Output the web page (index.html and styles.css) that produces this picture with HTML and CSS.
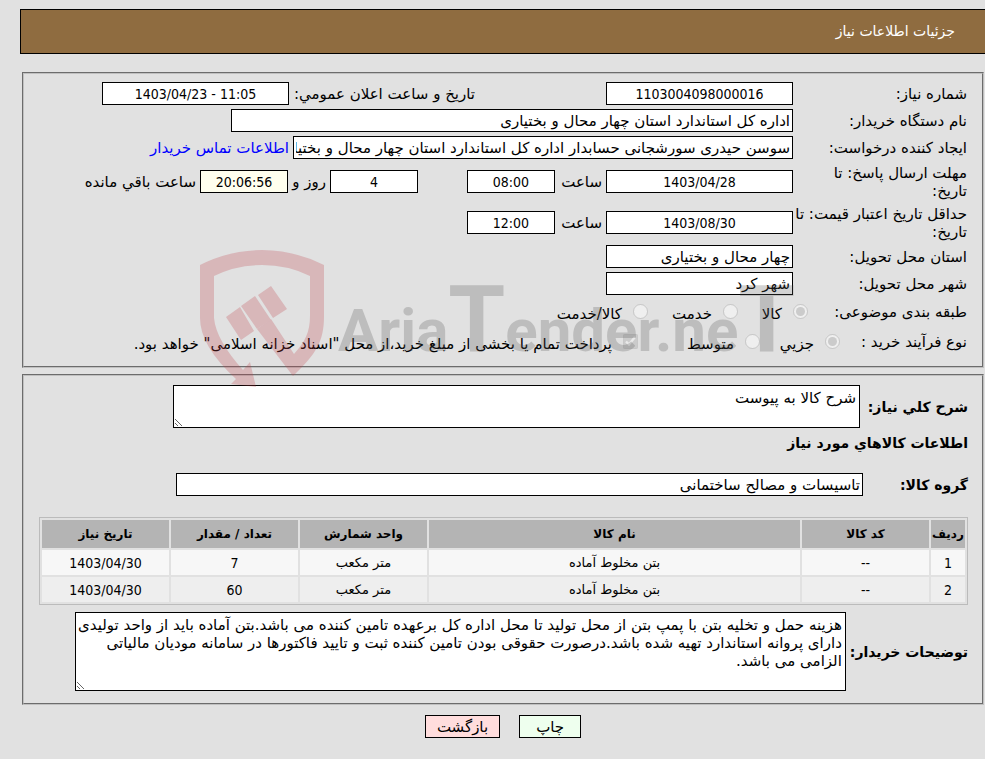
FILE: index.html
```
<!DOCTYPE html>
<html lang="fa" dir="rtl">
<head>
    <meta charset="UTF-8">
    <title>جزئیات اطلاعات نیاز</title>
    <link rel="stylesheet" href="styles.css">
</head>
<body>
<h1 class="title">جزئیات اطلاعات نیاز</h1>
<form class="page">
    <fieldset class="box info">
        <div class="row">
            <label class="name" for="number">شماره نیاز:</label>
            <input class="date num" id="number" value="1103004098000016" readonly>
            <label class="public" for="public">تاریخ و ساعت اعلان عمومي:</label>
            <input class="date num" id="public" value="1403/04/23 - 11:05" readonly>
        </div>
        <div class="row">
            <label class="name" for="org">نام دستگاه خریدار:</label>
            <input class="org" id="org" value="اداره کل استاندارد استان چهار محال و بختیاری" readonly>
        </div>
        <div class="row">
            <label class="name" for="creator">ایجاد کننده درخواست:</label>
            <input class="creator" id="creator" value="سوسن حیدری سورشجانی حسابدار اداره کل استاندارد استان چهار محال و بختیاری" readonly>
            <a href="#contact">اطلاعات تماس خریدار</a>
        </div>
        <div class="row tall">
            <label class="name" for="reply">مهلت ارسال پاسخ: تا<br>تاریخ:</label>
            <input class="date num" id="reply" value="1403/04/28" readonly>
            <label class="hour" for="replyHour">ساعت</label>
            <input class="time num" id="replyHour" value="08:00" readonly>
            <input class="time num days" id="days" value="4" readonly>
            <label class="and" for="days">روز و</label>
            <input class="time num remain" id="remain" value="20:06:56" readonly>
            <label for="remain">ساعت باقي مانده</label>
        </div>
        <div class="row tall">
            <label class="name" for="credit">حداقل تاریخ اعتبار قیمت: تا<br>تاریخ:</label>
            <input class="date num" id="credit" value="1403/08/30" readonly>
            <label class="hour" for="creditHour">ساعت</label>
            <input class="time num" id="creditHour" value="12:00" readonly>
        </div>
        <div class="row">
            <label class="name" for="state">استان محل تحویل:</label>
            <input class="date" id="state" value="چهار محال و بختیاری" readonly>
        </div>
        <div class="row">
            <label class="name" for="city">شهر محل تحویل:</label>
            <input class="date" id="city" value="شهر کرد" readonly>
        </div>
        <div class="row options">
            <span class="subject">طبقه بندی موضوعی:</span>
            <label class="kind kala"><input type="radio" name="kind" checked disabled>کالا</label>
            <label class="kind khedmat"><input type="radio" name="kind" disabled>خدمت</label>
            <label class="kind"><input type="radio" name="kind" disabled>کالا/خدمت</label>
        </div>
        <div class="row options">
            <span class="process">نوع فرآیند خرید :</span>
            <label class="kind small"><input type="radio" name="size" checked disabled>جزیي</label>
            <label class="kind medium"><input type="radio" name="size" disabled>متوسط</label>
            <label class="kind"><input type="checkbox" checked disabled>پرداخت تمام یا بخشی از مبلغ خرید،از محل "اسناد خزانه اسلامی" خواهد بود.</label>
        </div>
    </fieldset>
    <fieldset class="box goods">
        <div class="row">
            <label class="bold general" for="summary">شرح کلي نیاز:</label>
            <textarea class="summary" id="summary" readonly>شرح کالا به پیوست</textarea>
        </div>
        <h2 class="bold">اطلاعات کالاهاي مورد نیاز</h2>
        <div class="row">
            <label class="bold group" for="group">گروه کالا:</label>
            <input class="groupName" id="group" value="تاسیسات و مصالح ساختمانی" readonly>
        </div>
        <table>
            <thead>
            <tr>
                <th class="c1">ردیف</th>
                <th class="c2">کد کالا</th>
                <th>نام کالا</th>
                <th class="c2">واحد شمارش</th>
                <th class="c2">تعداد / مقدار</th>
                <th class="c2">تاریخ نیاز</th>
            </tr>
            </thead>
            <tbody>
            <tr>
                <td class="num">1</td>
                <td class="num">--</td>
                <td>بتن مخلوط آماده</td>
                <td>متر مکعب</td>
                <td class="num">7</td>
                <td class="num">1403/04/30</td>
            </tr>
            <tr>
                <td class="num">2</td>
                <td class="num">--</td>
                <td>بتن مخلوط آماده</td>
                <td>متر مکعب</td>
                <td class="num">60</td>
                <td class="num">1403/04/30</td>
            </tr>
            </tbody>
        </table>
        <div class="row">
            <label class="bold" for="notes">توضیحات خریدار:</label>
            <textarea class="notes" id="notes" readonly>هزینه حمل و تخلیه بتن با پمپ بتن از محل تولید تا محل اداره کل برعهده تامین کننده می باشد.بتن آماده باید از واحد تولیدی
دارای پروانه استاندارد تهیه شده باشد.درصورت حقوقی بودن تامین کننده ثبت و تایید فاکتورها در سامانه مودیان مالیاتی
الزامی می باشد.</textarea>
        </div>
    </fieldset>
    <div class="buttons">
        <button type="button" class="print">چاپ</button>
        <button type="button" class="back">بازگشت</button>
    </div>
    <div class="watermark" aria-hidden="true">
        <svg width="600" height="140" viewBox="0 0 600 140">
            <g class="shield">
                <path d="M0 15Q30 0 62 0T124 15V66C124 92 116 104 93 126L57 79L71 69L94 104C105 92 110 82 110 66V26Q88 15 62 15T14 26V68Q16 90 43 120L50 112L56 137L31 134L36 129Q0 96 0 68Z"/>
                <path d="M26 67L40 57L54 81L41 90ZM41 56L55 46L71 70L57 79ZM58 45L71 36L87 59L73 68Z"/>
            </g>
            <text x="138" y="101">Aria<tspan class="big">T</tspan>ender.ne<tspan class="big">T</tspan></text>
        </svg>
    </div>
</form>
</body>
</html>
```
FILE: styles.css
```
* {
    box-sizing: border-box;
}
body {
    margin: 0;
    padding: 9px 0 20px;
    background-color: #e1e1e1;
    font: 15px/18px "DejaVu Sans", sans-serif;
    color: #000;
}
input,textarea,button {
    font: inherit;
    color: inherit;
}
.title {
    height: 45px;
    margin: 0 0 18px 20px;
    padding: 0 30px;
    border: 1px solid #000;
    border-right: none;
    background-color: #8f6c40;
    font-size: 14px;
    font-weight: normal;
    line-height: 43px;
    color: #fff;
}
.page {
    position: relative;
    margin: 0 1px 0 22px;
}
.box {
    min-width: 0;
    margin: 0;
    border: 2px groove #c0c0c0;
}
.info {
    display: flex;
    flex-direction: column;
    gap: 4px;
    margin-bottom: 6px;
    padding: 8px 15px 11px;
}
.row {
    display: flex;
    align-items: center;
    gap: 4px;
    white-space: nowrap;
}
.tall {
    height: 37px;
}
.name {
    width: 170px;
    flex: none;
}
.row > input {
    height: 23px;
    padding: 0 2px;
    border: 1px solid #000;
    background-color: #fff;
}
.num {
    font-family: "DejaVu Sans Condensed", "DejaVu Sans", sans-serif;
    font-size: 14px;
}
.row .date {
    width: 187px;
}
.row .num {
    direction: ltr;
    text-align: center;
}
.public {
    width: 182px;
    margin-right: 127px;
}
.row .org {
    width: 562px;
}
.row .creator {
    width: 500px;
}
a {
    color: #0000ff;
    text-decoration: none;
}
.hour {
    width: 43px;
}
.row .time {
    width: 88px;
}
.row .days {
    margin-right: 45px;
}
.and {
    width: 34px;
}
.row .remain {
    background-color: #ffffee;
}
.options {
    height: 26px;
}
.subject {
    width: 155px;
}
.process {
    width: 123px;
}
.kind {
    display: flex;
    align-items: center;
    gap: 11px;
    padding-top: 4px;
}
.kind input {
    width: 15px;
    height: 15px;
    margin: 0 0 6px;
}
.kala {
    width: 66px;
}
.khedmat {
    width: 86px;
}
.small {
    width: 76px;
}
.medium {
    width: 118px;
}
.goods {
    padding: 9px 14px 12px 15px;
}
.bold {
    margin: 0;
    font-size: 14px;
    font-weight: bold;
}
h2.bold {
    margin: 6px 0 21px;
}
textarea {
    padding: 3px;
    border: 1px solid #000;
    background-color: #fff;
    white-space: pre;
    overflow: hidden;
}
.general {
    width: 104px;
}
.summary {
    width: 687px;
    height: 43px;
}
.group {
    width: 101px;
}
.row .groupName {
    width: 687px;
}
table {
    width: 100%;
    margin: 21px 0 7px;
    border: 1px solid #bbb;
    border-spacing: 2px;
    table-layout: fixed;
    font-size: 13px;
    text-align: center;
}
th {
    height: 28px;
    padding: 0;
    background-color: #b4b4b4;
    font-size: 12px;
}
td {
    height: 25px;
    padding: 0;
    background-color: #eee;
}
tbody tr:first-child td {
    background-color: #f7f7f7;
}
.c1 {
    width: 34px;
}
.c2 {
    width: 127px;
}
.notes {
    width: 771px;
    height: 79px;
}
.buttons {
    display: flex;
    justify-content: center;
    gap: 19px;
    padding: 10px 0;
}
.buttons button {
    height: 23px;
    padding: 0 11px;
    border: 1px solid #000;
}
.print {
    min-width: 62px;
    background-color: #eeffee;
}
.back {
    min-width: 75px;
    background-color: #ffdddd;
}
.watermark {
    position: absolute;
    top: 178px;
    left: 178px;
    pointer-events: none;
}
.shield {
    fill: #be3c46;
    opacity: 0.25;
}
.watermark text {
    direction: ltr;
    fill: #555;
    opacity: 0.25;
    font-family: Roboto, sans-serif;
    font-size: 60px;
    font-weight: bold;
}
.watermark .big {
    font-size: 92px;
}
```
